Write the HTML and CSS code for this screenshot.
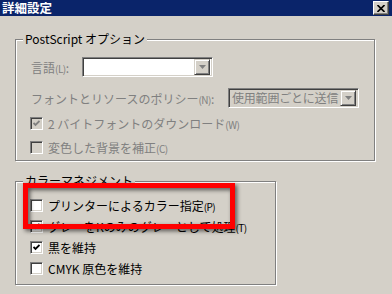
FILE: index.html
```html
<!DOCTYPE html>
<html lang="ja">
<head>
<meta charset="utf-8">
<link rel="stylesheet" href="styles.css">
</head>
<body>
<div class="titlebar">
  <span class="title">詳細設定</span>
  <span class="closebtn"><svg width="8" height="7" viewBox="0 0 8 7"><path d="M0.5 0 L7.5 7 M7.5 0 L0.5 7" stroke="#000" stroke-width="1.6"/></svg></span>
</div>
<div class="main">
  <div class="group group1">
    <span class="legend">PostScript オプション</span>
    <div class="row row1">
      <span class="label dis lab1">言語<small>(L)</small>:</span>
      <span class="select">
        <span class="seltext"></span>
        <span class="dropbtn"><svg width="7" height="4" viewBox="0 0 7 4"><path d="M0 0 H7 L3.5 4 Z" fill="#808080"/></svg></span>
      </span>
    </div>
    <div class="row row2">
      <span class="label dis lab2">フォントとリソースのポリシー<small>(N)</small>:</span>
      <span class="select disabled">
        <span class="seltext">使用範囲ごとに送信</span>
        <span class="dropbtn"><svg width="7" height="4" viewBox="0 0 7 4"><path d="M0 0 H7 L3.5 4 Z" fill="#808080"/></svg></span>
      </span>
    </div>
    <div class="cbrow r3">
      <span class="cb disabled"><svg width="7" height="7" viewBox="0 0 7 7"><path d="M0.5 3 L2.5 5 L6.5 1" stroke="#808080" stroke-width="1.8" fill="none"/></svg></span>
      <span class="dis">2 バイトフォントのダウンロード<small>(W)</small></span>
    </div>
    <div class="cbrow r4">
      <span class="cb disabled"></span>
      <span class="dis">変色した背景を補正<small>(C)</small></span>
    </div>
  </div>
  <div class="group group2">
    <span class="legend">カラーマネジメント</span>
    <div class="cbrow first">
      <span class="cb"></span>
      <span>プリンターによるカラー指定<small>(P)</small></span>
    </div>
    <div class="cbrow">
      <span class="cb"><svg width="7" height="7" viewBox="0 0 7 7"><path d="M0.5 3 L2.5 5 L6.5 1" stroke="#000" stroke-width="1.8" fill="none"/></svg></span>
      <span>グレーをKのみのグレーとして処理<small>(T)</small></span>
    </div>
    <div class="cbrow">
      <span class="cb"><svg width="7" height="7" viewBox="0 0 7 7"><path d="M0.5 3 L2.5 5 L6.5 1" stroke="#000" stroke-width="1.8" fill="none"/></svg></span>
      <span>黒を維持</span>
    </div>
    <div class="cbrow">
      <span class="cb"></span>
      <span>CMYK 原色を維持</span>
    </div>
  </div>
</div>
<div class="highlight"></div>
</body>
</html>
```
FILE: styles.css
```css
html, body {
  margin: 0;
  padding: 0;
}
body {
  width: 392px;
  height: 294px;
  overflow: hidden;
  background: #d4d0c8;
  font-family: "Noto Sans CJK JP", sans-serif;
  font-size: 12px;
  color: #000;
  position: relative;
}
small {
  font-size: 10px;
  letter-spacing: -0.5px;
}
.titlebar {
  height: 16px;
  background: #0a246a;
  display: flex;
  align-items: flex-start;
  justify-content: space-between;
  padding: 0 3px 0 2px;
}
.title {
  color: #fff;
  font-weight: bold;
  font-size: 12.5px;
  line-height: 16px;
}
.closebtn {
  margin-top: 1px;
  width: 16px;
  height: 14px;
  box-sizing: border-box;
  background: #d4d0c8;
  border: 1px solid;
  border-color: #fff #404040 #404040 #fff;
  box-shadow: inset -1px -1px #808080;
  display: flex;
  align-items: center;
  justify-content: center;
}
.main {
  padding-left: 15px;
}
.group {
  position: relative;
  border: 1px solid #808080;
  box-shadow: 1px 1px 0 #fff, inset 1px 1px 0 #fff;
  box-sizing: border-box;
}
.legend {
  position: absolute;
  top: -9px;
  left: 7px;
  padding: 0 2px;
  background: #d4d0c8;
  line-height: 16px;
  font-size: 12px;
}
.group1 {
  margin-top: 23px;
  width: 360px;
  height: 122px;
  padding: 17px 0 0 15px;
}
.group2 {
  margin-top: 20px;
  width: 261px;
  height: 104px;
  padding: 17px 0 0 14px;
}
.row {
  display: flex;
  align-items: center;
  height: 20px;
}
.row2 {
  margin-top: 11px;
}
.label {
  white-space: nowrap;
}
.lab1 {
  width: 51px;
}
.lab2 {
  width: 197px;
}
.dis {
  color: #808080;
}
.select {
  width: 131px;
  height: 20px;
  box-sizing: border-box;
  border: 1px solid;
  border-color: #808080 #fff #fff #808080;
  box-shadow: inset 1px 1px 0 #404040, inset -1px -1px 0 #d4d0c8;
  background: #fff;
  display: flex;
  align-items: center;
  padding: 2px 2px 2px 1px;
}
.select.disabled {
  background: #d4d0c8;
  color: #808080;
}
.seltext {
  flex: 1;
  min-width: 0;
  padding-left: 2px;
  line-height: 16px;
  white-space: nowrap;
  letter-spacing: -0.2px;
}
.dropbtn {
  width: 16px;
  height: 16px;
  flex: none;
  box-sizing: border-box;
  background: #d4d0c8;
  border: 1px solid;
  border-color: #d4d0c8 #404040 #404040 #d4d0c8;
  box-shadow: inset 1px 1px 0 #fff, inset -1px -1px 0 #808080;
  display: flex;
  align-items: center;
  justify-content: center;
}
.cbrow {
  display: flex;
  align-items: center;
  height: 13px;
  gap: 5px;
  margin-top: 8px;
  white-space: nowrap;
}
.group1 .cbrow {
  margin-left: -1px;
}
.cbrow.first {
  margin-top: 0;
}
.r3 {
  margin-top: 9px;
}
.r4 {
  margin-top: 11px;
}
.cb {
  width: 13px;
  height: 13px;
  flex: none;
  box-sizing: border-box;
  border: 1px solid;
  border-color: #808080 #fff #fff #808080;
  box-shadow: inset 1px 1px 0 #404040, inset -1px -1px 0 #d4d0c8;
  background: #fff;
  display: flex;
  align-items: center;
  justify-content: center;
}
.cb.disabled {
  background: #d4d0c8;
}
.highlight {
  position: absolute;
  left: 23px;
  top: 183px;
  width: 212px;
  height: 46px;
  box-sizing: border-box;
  border: 5px solid #ff0000;
  filter: drop-shadow(2px 2px 2px rgba(0, 0, 0, 0.6));
}
```
